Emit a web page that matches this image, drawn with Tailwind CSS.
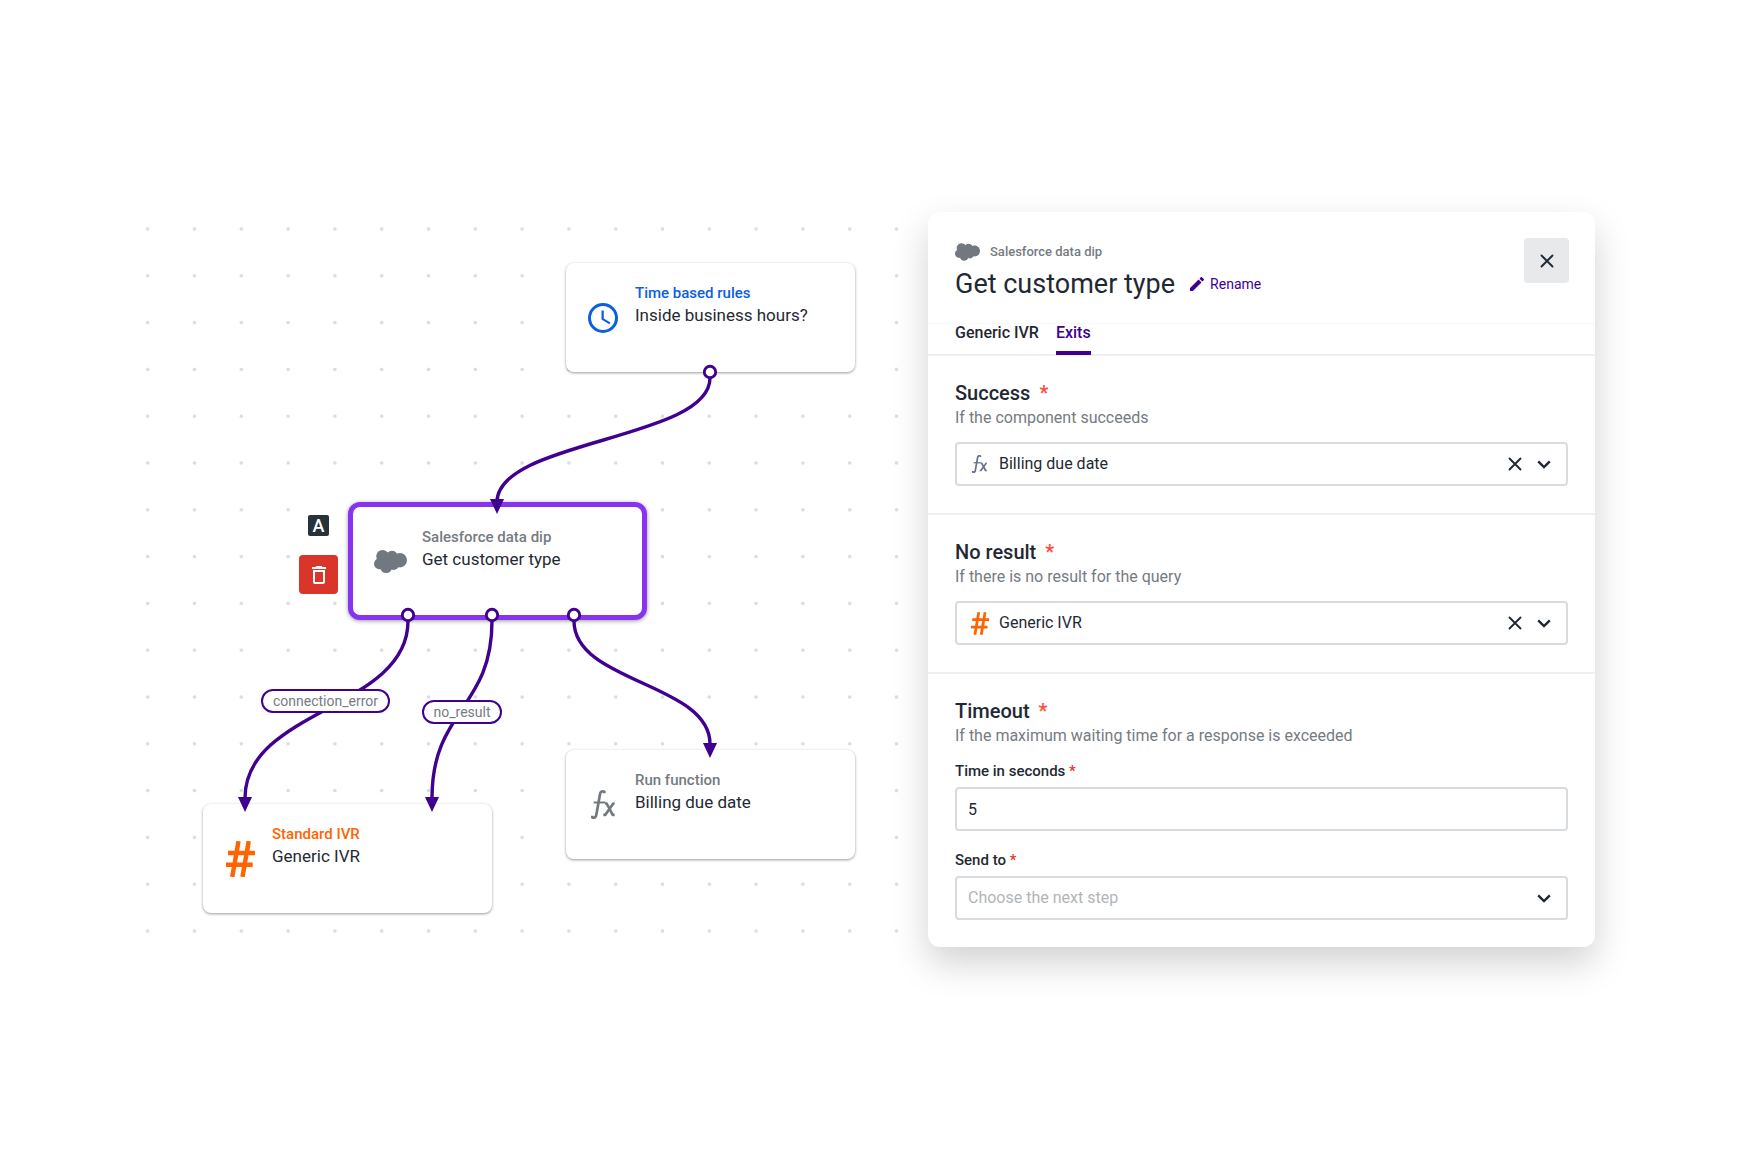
<!DOCTYPE html>
<html lang="en">
<head>
<meta charset="utf-8">
<meta name="viewport" content="width=device-width, initial-scale=1">
<title>Flow editor</title>
<script src="https://cdn.jsdelivr.net/npm/@tailwindcss/browser@4"></script>
</head>
<body class="bg-white font-[Roboto,sans-serif] text-[#1f2933]">
<svg class="hidden" aria-hidden="true">
  <symbol id="cloud" viewBox="0 3.6 24 16.8"><path fill="currentColor" d="M10.006 5.415a4.195 4.195 0 0 1 3.045-1.306c1.56 0 2.954.9 3.69 2.205.63-.3 1.35-.45 2.1-.45 2.85 0 5.159 2.34 5.159 5.22s-2.31 5.22-5.176 5.22c-.345 0-.69-.044-1.02-.104a3.75 3.75 0 0 1-3.3 1.95c-.6 0-1.155-.15-1.65-.375A4.314 4.314 0 0 1 8.88 20.4a4.302 4.302 0 0 1-4.05-2.82c-.27.062-.54.076-.825.076-2.204 0-4.005-1.8-4.005-4.05 0-1.5.811-2.805 2.01-3.51-.255-.57-.39-1.2-.39-1.846 0-2.58 2.1-4.65 4.65-4.65 1.53 0 2.85.705 3.72 1.8"/></symbol>
  <symbol id="fx" viewBox="0 0 72 86"><g fill="none" stroke="currentColor" stroke-width="8" stroke-linejoin="round"><path d="M40 9V5Q29 0 27 12L16 74Q14 85 4 82V77"/><path stroke-width="6" d="M8 37H43"/><path d="M42 40H47L65 74H71"/><path d="M71 40H67L43 74H37"/></g></symbol>
  <symbol id="hash" viewBox="0 0 88 109"><path fill="none" stroke="currentColor" stroke-width="13.5" d="M38 0 19 109M69 0 50 109M6 36H88M0 72H81"/></symbol>
  <symbol id="cross" viewBox="0 0 14 14"><path fill="none" stroke="currentColor" stroke-width="1.9" stroke-linecap="round" d="M1.5 1.5 12.5 12.5M12.5 1.5 1.5 12.5"/></symbol>
  <symbol id="chevron" viewBox="0 0 14 9"><path fill="none" stroke="currentColor" stroke-width="2.4" d="M1.2 1.4 7 7 12.8 1.4"/></symbol>
</svg>

<main class="mx-auto flex min-h-screen w-full max-w-[1450px] items-center pb-px">
  <section aria-label="Flow canvas" class="relative min-w-[760px] flex-1 self-center">
    <div class="h-[735px]">
      <svg class="h-full w-full" aria-hidden="true">
        <defs><pattern id="dots" x="-20.7" y="-6.4" width="46.8" height="46.8" patternUnits="userSpaceOnUse"><circle cx="23.4" cy="23.4" r="1.8" fill="#d9dbde"/></pattern></defs>
        <rect width="100%" height="100%" fill="url(#dots)"/>
      </svg>
    </div>

    <article class="absolute left-[421px] top-[51px] flex h-[109px] w-[289px] rounded-lg bg-white px-5 py-5 shadow-[0_1px_3px_rgba(0,0,0,0.4)]">
      <div class="mr-[15px] flex w-[34px] items-center justify-center text-[#0b5fe0]">
        <svg class="size-[30px]" viewBox="2 2 20 20" aria-hidden="true"><circle cx="12" cy="12" r="9" fill="none" stroke="currentColor" stroke-width="2"/><path fill="currentColor" d="M12.5 7H11v6l5.25 3.15.75-1.23-4.5-2.67z"/></svg>
      </div>
      <div>
        <p class="text-[15px] font-medium leading-5 text-[#0b5fe0]">Time based rules</p>
        <h3 class="text-[17px] leading-6">Inside business hours?</h3>
      </div>
    </article>

    <article class="absolute left-[203px] top-[290px] flex h-[118px] w-[299px] rounded-xl border-[5px] border-[#8833f2] bg-white px-5 py-5 shadow-[0_1px_4px_rgba(0,0,0,0.4)]">
      <div class="mr-[15px] flex w-[34px] items-center justify-center text-[#717880]">
        <svg class="h-[23px] w-[33px]" aria-hidden="true"><use href="#cloud"/></svg>
      </div>
      <div>
        <p class="text-[15px] font-medium leading-5 text-[#757b82]">Salesforce data dip</p>
        <h3 class="text-[17px] leading-6">Get customer type</h3>
      </div>
    </article>

    <article class="absolute left-[58px] top-[592px] flex h-[109px] w-[289px] rounded-lg bg-white px-5 py-5 shadow-[0_1px_3px_rgba(0,0,0,0.4)]">
      <div class="mr-[15px] flex w-[34px] items-center justify-center text-[#ff6400]">
        <svg class="h-[36px] w-[29px]" aria-hidden="true"><use href="#hash"/></svg>
      </div>
      <div>
        <p class="text-[15px] font-medium leading-5 text-[#ff6400]">Standard IVR</p>
        <h3 class="text-[17px] leading-6">Generic IVR</h3>
      </div>
    </article>

    <article class="absolute left-[421px] top-[538px] flex h-[109px] w-[289px] rounded-lg bg-white px-5 py-5 shadow-[0_1px_3px_rgba(0,0,0,0.4)]">
      <div class="mr-[15px] flex w-[34px] items-center justify-center text-[#717880]">
        <svg class="h-[29px] w-[24px]" aria-hidden="true"><use href="#fx"/></svg>
      </div>
      <div>
        <p class="text-[15px] font-medium leading-5 text-[#757b82]">Run function</p>
        <h3 class="text-[17px] leading-6">Billing due date</h3>
      </div>
    </article>

    <div class="absolute left-[154px] top-[294px] flex flex-col gap-[10px]">
      <button type="button" aria-label="Edit label" class="flex size-[39px] items-center justify-center rounded bg-white">
        <span class="flex size-[21px] items-center justify-center rounded-xs bg-[#27323a] text-lg font-medium leading-none text-white">A</span>
      </button>
      <button type="button" aria-label="Delete" class="flex size-[39px] items-center justify-center rounded bg-[#da352a] text-white">
        <svg class="size-6" viewBox="0 0 24 24" aria-hidden="true"><path fill="currentColor" d="M6 19c0 1.1.9 2 2 2h8c1.1 0 2-.9 2-2V7H6v12zM8 9h8v10H8V9zm7.5-5l-1-1h-5l-1 1H5v2h14V4z"/></svg>
      </button>
    </div>

    <svg class="pointer-events-none absolute inset-0 h-full w-full overflow-visible" aria-hidden="true">
      <g fill="none" stroke="#400090" stroke-width="3.4">
        <path d="M565 166C565 228 352 228 352 290"/>
        <path d="M263 409C263 497 100 497 100 586"/>
        <path d="M347 409C347 497 287 497 287 586"/>
        <path d="M429 409C429 471 565 471 565 532"/>
      </g>
      <g fill="#400090">
        <path d="M345 287h14l-7 15z"/>
        <path d="M93 585h14l-7 15z"/>
        <path d="M280 585h14l-7 15z"/>
        <path d="M558 531h14l-7 15z"/>
      </g>
      <g fill="#fff" stroke="#400090" stroke-width="2.9">
        <circle cx="565" cy="160" r="5.7"/>
        <circle cx="263" cy="403" r="5.7"/>
        <circle cx="347" cy="403" r="5.7"/>
        <circle cx="429" cy="403" r="5.7"/>
      </g>
    </svg>

    <span class="absolute left-[116px] top-[477px] flex h-[24px] w-[129px] items-center justify-center rounded-full border-2 border-[#400090] bg-white text-sm text-[#757b82]">connection_error</span>
    <span class="absolute left-[277px] top-[488px] flex h-[24px] w-[80px] items-center justify-center rounded-full border-2 border-[#400090] bg-white text-sm text-[#757b82]">no_result</span>
  </section>

  <aside class="w-[46%] min-w-[480px] rounded-xl bg-white shadow-[0_16px_36px_rgba(0,0,0,0.18)]">
    <header class="flex h-[111px] items-start justify-between pl-[27px] pr-[26px] pt-[26px]">
      <div class="pt-1">
        <p class="flex items-center gap-[10px] text-[13px] font-medium leading-5 text-[#757b82]">
          <svg class="h-[18px] w-[25px] text-[#717880]" aria-hidden="true"><use href="#cloud"/></svg>
          Salesforce data dip
        </p>
        <div class="mt-1 flex items-center gap-[15px]">
          <h2 class="text-[27px] leading-9">Get customer type</h2>
          <button type="button" class="flex items-center gap-[6px] text-sm text-[#400090]">
            <svg class="size-[14px]" viewBox="3 3 18 18" aria-hidden="true"><path fill="currentColor" d="M3 17.25V21h3.75L17.81 9.94l-3.75-3.75L3 17.25zM20.71 7.04c.39-.39.39-1.02 0-1.41l-2.34-2.34c-.39-.39-1.02-.39-1.41 0l-1.83 1.83 3.75 3.75 1.83-1.83z"/></svg>
            Rename
          </button>
        </div>
      </div>
      <button type="button" aria-label="Close" class="flex size-[45px] items-center justify-center rounded bg-[#e7e9eb]">
        <svg class="size-[14px]" aria-hidden="true"><use href="#cross"/></svg>
      </button>
    </header>

    <nav class="flex h-[33px] gap-[17px] border-t border-b-2 border-t-[#f8f8f8] border-b-[#eeeff0] px-[27px] text-base font-medium leading-[18px]">
      <a href="#generic" class="h-[30px]">Generic IVR</a>
      <a href="#exits" aria-current="page" class="h-[31px] border-b-4 border-[#400090] text-[#400090]">Exits</a>
    </nav>

    <section class="border-b-2 border-[#eeeff0] px-[27px] pb-[27px] pt-[25px]">
      <h3 class="flex gap-[9px] text-xl font-medium leading-6"><label for="success">Success</label><span class="text-[#ff4a3a]">*</span></h3>
      <p class="text-base leading-[26px] text-[#757b82]">If the component succeeds</p>
      <div class="mt-[11px] flex h-[44px] items-center rounded border-2 border-[#d8dcdf] pl-[14px] pr-[15px]">
        <svg class="mr-[11px] h-[18px] w-[17px] text-[#66708c]" aria-hidden="true"><use href="#fx"/></svg>
        <select id="success" class="h-full min-w-0 flex-1 appearance-none bg-white text-base outline-none"><option>Billing due date</option><option>Generic IVR</option></select>
        <button type="button" aria-label="Clear success step" class="mr-[15px]"><svg class="size-[14px]" aria-hidden="true"><use href="#cross"/></svg></button>
        <svg class="h-[9px] w-[14px]" aria-hidden="true"><use href="#chevron"/></svg>
      </div>
    </section>

    <section class="border-b-2 border-[#eeeff0] px-[27px] pb-[27px] pt-[25px]">
      <h3 class="flex gap-[9px] text-xl font-medium leading-6"><label for="noresult">No result</label><span class="text-[#ff4a3a]">*</span></h3>
      <p class="text-base leading-[26px] text-[#757b82]">If there is no result for the query</p>
      <div class="mt-[11px] flex h-[44px] items-center rounded border-2 border-[#d8dcdf] pl-[14px] pr-[15px]">
        <svg class="mr-[10px] h-[23px] w-[18px] text-[#ff6400]" aria-hidden="true"><use href="#hash"/></svg>
        <select id="noresult" class="h-full min-w-0 flex-1 appearance-none bg-white text-base outline-none"><option>Generic IVR</option><option>Billing due date</option></select>
        <button type="button" aria-label="Clear no result step" class="mr-[15px]"><svg class="size-[14px]" aria-hidden="true"><use href="#cross"/></svg></button>
        <svg class="h-[9px] w-[14px]" aria-hidden="true"><use href="#chevron"/></svg>
      </div>
    </section>

    <section class="px-[27px] pb-[27px] pt-[25px]">
      <h3 class="flex gap-[9px] text-xl font-medium leading-6">Timeout<span class="text-[#ff4a3a]">*</span></h3>
      <p class="text-base leading-[26px] text-[#757b82]">If the maximum waiting time for a response is exceeded</p>
      <label for="seconds" class="mt-3 block text-[15px] font-medium leading-5">Time in seconds <span class="text-[#e0362b]">*</span></label>
      <input id="seconds" type="text" inputmode="numeric" value="5" class="mt-[6px] block h-[44px] w-full rounded border-2 border-[#d8dcdf] px-[11px] text-base outline-none">
      <label for="sendto" class="mt-[19px] block text-[15px] font-medium leading-5">Send to <span class="text-[#e0362b]">*</span></label>
      <div class="mt-[6px] flex h-[44px] items-center rounded border-2 border-[#d8dcdf] pl-[11px] pr-[15px]">
        <select id="sendto" class="h-full min-w-0 flex-1 appearance-none bg-white text-base text-[#b1b5b9] outline-none"><option>Choose the next step</option></select>
        <svg class="h-[9px] w-[14px]" aria-hidden="true"><use href="#chevron"/></svg>
      </div>
    </section>
  </aside>
</main>
</body>
</html>
